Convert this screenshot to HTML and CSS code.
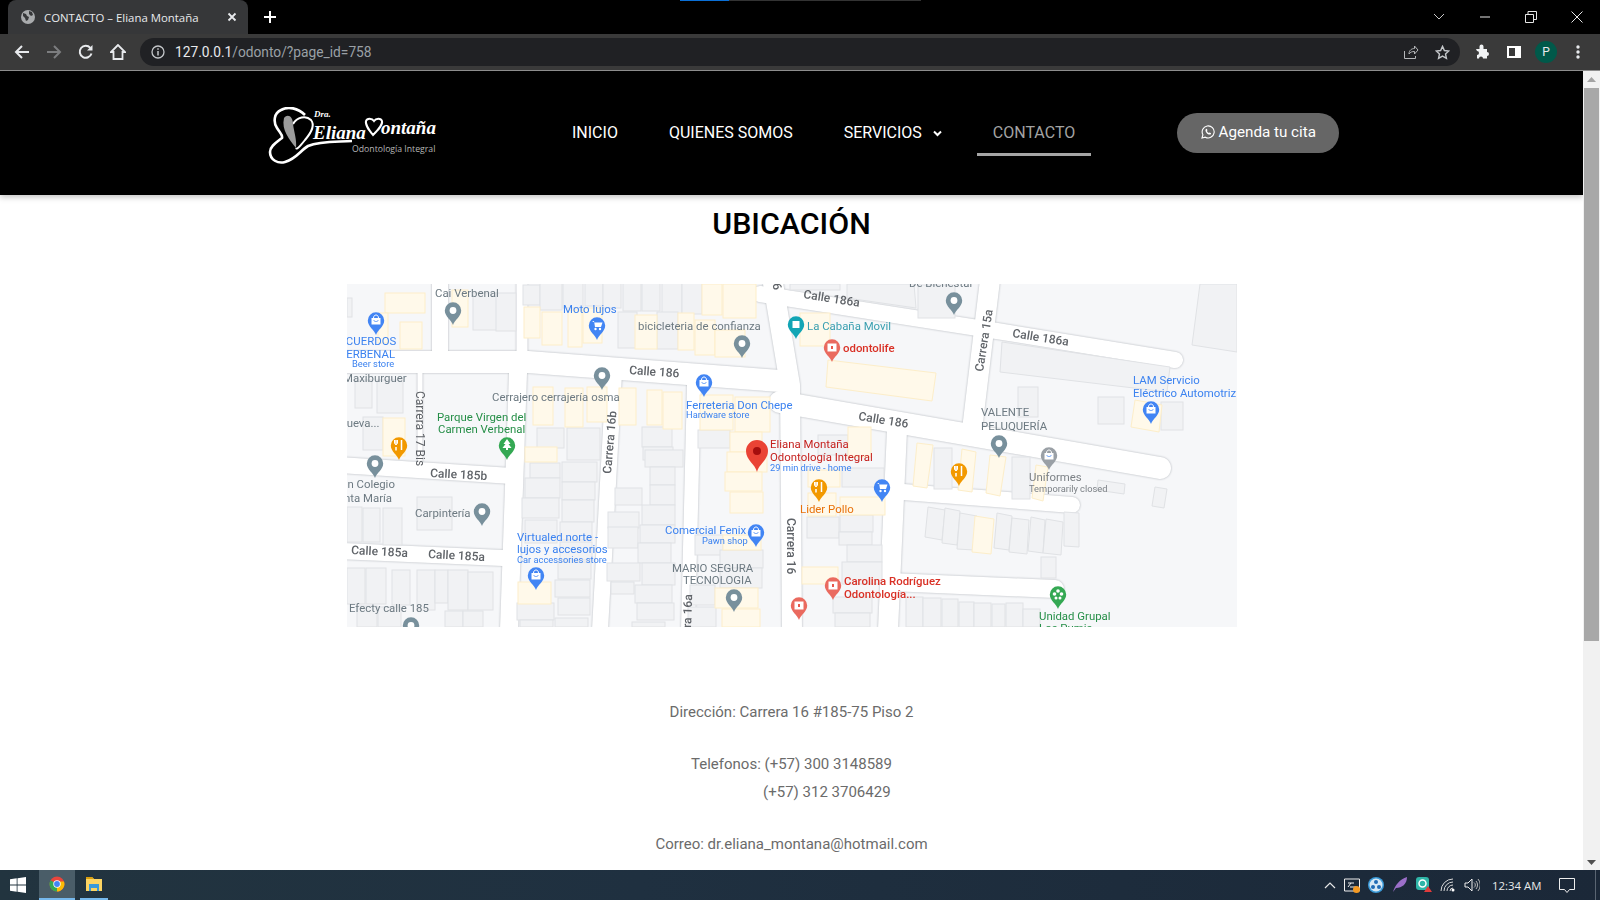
FILE: index.html
```html
<!DOCTYPE html>
<html lang="es">
<head>
<meta charset="utf-8">
<title>CONTACTO – Eliana Montaña</title>
<link rel="stylesheet" href="styles.css">
</head>
<body>
<div class="tabstrip">
  <div class="progress"><span class="progress-blue"></span><span class="progress-rest"></span></div>
  <div class="tab">
    <svg class="tab-globe" width="16" height="16" viewBox="0 0 16 16"><circle cx="8" cy="8" r="7" fill="#a9abad"/><path d="M3 4l3 1 1 2 2 1-1 3-2 1-1-3-2-2zM9 2l3 1 1 3-2 1-2-2z" fill="#37383a"/></svg>
    <span class="tab-title">CONTACTO – Eliana Montaña</span>
    <svg class="tab-close" width="10" height="10" viewBox="0 0 10 10"><path d="M1.500 1.500l7 7M8.500 1.500l-7 7" stroke="#e8eaed" stroke-width="1.800"/></svg>
  </div>
  <svg class="newtab" width="14" height="14" viewBox="0 0 14 14"><path d="M7 1v12M1 7h12" stroke="#fff" stroke-width="2"/></svg>
  <div class="winctl">
    <svg width="16" height="10" viewBox="0 0 16 10"><path d="M3 2l5 5 5-5" fill="none" stroke="#c8c8c8" stroke-width="1"/></svg>
    <svg width="12" height="12" viewBox="0 0 12 12"><path d="M1 6h10" stroke="#e6e6e6" stroke-width="1"/></svg>
    <svg width="12" height="12" viewBox="0 0 12 12"><path d="M.5 3.500h8v8h-8zM3 3.500V.5h8.500v8H8.500" fill="none" stroke="#e6e6e6" stroke-width="1"/></svg>
    <svg width="12" height="12" viewBox="0 0 12 12"><path d="M.5.5l11 11M11.500.5l-11 11" stroke="#e6e6e6" stroke-width="1"/></svg>
  </div>
</div>
<div class="toolbar">
  <svg class="tool" width="16" height="16" viewBox="0 0 16 16"><path d="M15 8H2M8 2L2 8l6 6" fill="none" stroke="#e8eaed" stroke-width="2"/></svg>
  <svg class="tool" width="16" height="16" viewBox="0 0 16 16"><path d="M1 8h13M8 2l6 6-6 6" fill="none" stroke="#7c7d7f" stroke-width="2"/></svg>
  <svg class="tool" width="16" height="16" viewBox="0 0 16 16"><path d="M13.500 9.500A6 6 0 1 1 12.300 3.800" fill="none" stroke="#e8eaed" stroke-width="2"/><path d="M14.500 1v5.500H9z" fill="#e8eaed"/></svg>
  <svg class="tool" width="16" height="16" viewBox="0 0 16 16"><path d="M8 1L1 8h2.500v7h9V8H15z" fill="none" stroke="#e8eaed" stroke-width="1.800"/></svg>
  <div class="omnibox">
    <svg width="14" height="14" viewBox="0 0 14 14"><circle cx="7" cy="7" r="6" fill="none" stroke="#c4c7ca" stroke-width="1.300"/><path d="M7 6v4.500M7 3.300v1.500" stroke="#c4c7ca" stroke-width="1.500"/></svg>
    <span class="url"><span class="url-host">127.0.0.1</span>/odonto/?page_id=758</span>
    <svg class="omni-share" width="16" height="16" viewBox="0 0 16 16"><path d="M1.500 7v7.500h11V12M6 10c0-4 3-5.500 5.500-5.500V2L15 6l-3.500 4V7.500C9 7.500 7.500 8 6 10z" fill="none" stroke="#b5b7b9" stroke-width="1"/></svg>
    <svg width="15" height="15" viewBox="0 0 16 16"><path d="M8 1.500l2 4.400 4.700.5-3.500 3.200 1 4.700L8 11.900l-4.200 2.400 1-4.700L1.300 6.400 6 5.900z" fill="none" stroke="#c4c7ca" stroke-width="1.500"/></svg>
  </div>
  <div class="toolright">
    <svg width="16" height="16" viewBox="0 0 16 16"><path d="M1 6h3.500V3.500a2 2 0 0 1 4 0V6H12v3a2 2 0 0 1 0 4v2.500H8a2 2 0 0 0-4 0H2v-3.500a2 2 0 0 0 0-4z" fill="#f1f3f4" transform="translate(1 -1)"/></svg>
    <svg width="14" height="12" viewBox="0 0 14 12"><path d="M0 0h14v12H0zM2 2v8h6V2z" fill="#fff" fill-rule="evenodd"/></svg>
    <span class="avatar">P</span>
    <svg width="4" height="14" viewBox="0 0 4 14"><circle cx="2" cy="2" r="1.700" fill="#e8eaed"/><circle cx="2" cy="7" r="1.700" fill="#e8eaed"/><circle cx="2" cy="12" r="1.700" fill="#e8eaed"/></svg>
  </div>
</div>
<div class="viewport">
  <main class="page">
    <header class="site-header">
      <a class="logo">
        <svg width="172" height="58" viewBox="268 107 172 58">
          <path d="M305 115C298 108 288 106 281 110C274 113 273 122 277 128C280 133 283 135 282 138C277 142 270 146 270 152C270 160 278 164 285 162C296 159 301 150 308 146C320 141 335 142 352 141" fill="none" stroke="#fff" stroke-width="2.600"/>
          <path d="M293 124C297 117 306 115 311 120C315 125 311 133 305 140C301 145 297 150 296 148" fill="none" stroke="#fff" stroke-width="2"/>
          <path d="M284 118C288 113 293 117 293 124C294 132 297 140 296 148C290 140 281 130 284 118Z" fill="#9b9b9b"/>
          <text class="logo-dra" x="314" y="117">Dra.</text>
          <text class="logo-name" x="313" y="139">Eliana</text>
          <path d="M373 135c-4-5-8-10-7-14 1-3 6-3 8 0 2-3 7-3 8 0 1 4-4 9-9 14z" fill="none" stroke="#fff" stroke-width="2"/>
          <text class="logo-name" x="381" y="134">ontaña</text>
          <text class="logo-sub" x="352" y="152">Odontología Integral</text>
        </svg>
      </a>
      <nav class="nav">
        <a class="nav-item">INICIO</a>
        <a class="nav-item">QUIENES SOMOS</a>
        <a class="nav-item">SERVICIOS<svg class="chev" width="9" height="7" viewBox="0 0 9 7"><path d="M1 1.500l3.500 3.500L8 1.500" fill="none" stroke="#fff" stroke-width="2"/></svg></a>
        <a class="nav-item nav-current">CONTACTO</a>
      </nav>
      <a class="cta">
        <svg width="14" height="14" viewBox="0 0 14 14"><path d="M1 13l.9-3.200A6 6 0 1 1 4.300 12.200z" fill="none" stroke="#fff" stroke-width="1.100"/><path d="M5 4c-1 1-.6 2.500.6 3.900S8.600 10 9.800 9.200l.3-1-1.500-.8-.7.600c-.9-.4-1.600-1.100-2-2l.6-.7-.7-1.500z" fill="#fff"/></svg>
        Agenda tu cita
      </a>
    </header>
    <h1 class="title">UBICACIÓN</h1>
    <svg class="map" width="890" height="343" viewBox="347 284 890 343">
      <defs>
        <path id="pinshape" d="M0 0C-1.500-5-8.200-8.500-8.200-14.500A8.200 8.200 0 1 1 8.200-14.500C8.200-8.500 1.500-5 0 0Z"/>
        <g id="pd"><use href="#pinshape"/><circle cy="-14.500" r="3.400" fill="#fff"/></g>
        <g id="ps"><use href="#pinshape"/><path d="M-4.500-17h9v6.500h-9z" fill="#fff"/><path d="M-2.500-17c0-4 5-4 5 0" fill="none" stroke="#fff"/><path d="M-2.500-15c1 2 4 2 5 0" fill="none" stroke="#4285f4" stroke-width=".8"/></g>
        <g id="pc"><use href="#pinshape"/><path d="M-5-19h2l1 6h6l1.500-4.500h-8" fill="#fff"/><circle cx="-1.500" cy="-11" r="1.200" fill="#fff"/><circle cx="3" cy="-11" r="1.200" fill="#fff"/></g>
        <g id="pf"><use href="#pinshape"/><path d="M-3-20v5M-3-13v3.500M2.500-20v10" stroke="#fff" stroke-width="1.500"/><path d="M-4.500-20v3c0 2 3 2 3 0v-3" fill="none" stroke="#fff"/></g>
        <g id="ph"><use href="#pinshape"/><path d="M-4.500-18.500h9v8h-9z" fill="#fff"/><path d="M-1-16h2v3h-2z" fill="#e8574c"/></g>
        <g id="pt"><use href="#pinshape"/><path d="M0-21l3.500 5H1.500l3 4h-3.500v2h-2v-2h-3.500l3-4h-2z" fill="#fff"/></g>
        <g id="pg"><use href="#pinshape"/><circle cy="-18" r="1.800" fill="#fff"/><circle cx="-3.500" cy="-15" r="1.800" fill="#fff"/><circle cx="3.500" cy="-15" r="1.800" fill="#fff"/><circle cx="-2" cy="-11" r="1.500" fill="#fff"/><circle cx="2" cy="-11" r="1.500" fill="#fff"/></g>
        <g id="pq"><use href="#pinshape"/><path d="M-3.500-18h7v7h-7z" fill="#fff"/></g>
      </defs>
      <rect class="ground" x="347" y="284" width="890" height="343"/>
      <g class="roads">
        <path class="w22" d="M340 362H528L780 381"/>
        <path class="w22" d="M780 402L1160 468"/>
        <path class="w20" d="M773 283L790 385L792 630"/>
        <path class="w16" d="M760 294L997 331L1175 360"/>
        <path class="w20" d="M990 280L972 430"/>
        <path class="w16" d="M614 373L600 630"/>
        <path class="w14" d="M694 385L688 630"/>
        <path class="w5" d="M420 373V465"/>
        <path class="w16" d="M340 465L512 476"/>
        <path class="w18" d="M518 373L509 630"/>
        <path class="w11" d="M522 280V362"/>
        <path class="w16" d="M340 551L503 558"/>
        <path class="w16" d="M440 280V355"/>
        <path class="w20" d="M897 430L888 630"/>
        <path class="w16" d="M890 491L1072 505"/>
        <path class="w18" d="M890 582L1055 589"/>
      </g>
      <g class="bld">
        <rect x="347" y="298" width="5" height="19"/><rect x="473" y="293" width="24" height="37"/><rect x="496" y="293" width="20" height="38"/>
        <rect x="523" y="285" width="17" height="20"/><rect x="540" y="283" width="22" height="27"/><rect x="563" y="283" width="20" height="25"/><rect x="585" y="283" width="18" height="23"/><rect x="603" y="283" width="18" height="25"/><rect x="623" y="283" width="18" height="28"/><rect x="642" y="283" width="18" height="28"/><rect x="662" y="283" width="20" height="31"/><rect x="682" y="283" width="20" height="31"/>
        <rect x="618" y="312" width="19" height="36"/><rect x="657" y="312" width="21" height="37"/>
        <rect x="355" y="380" width="17" height="28"/><rect x="377" y="380" width="26" height="33"/><rect x="363" y="417" width="20" height="33"/>
        <rect x="537" y="428" width="27" height="20"/><rect x="567" y="428" width="33" height="32"/><rect x="642" y="427" width="30" height="20"/><rect x="643" y="447" width="30" height="13"/><rect x="698" y="430" width="32" height="18"/>
        <rect x="530" y="463" width="30" height="15"/><rect x="562" y="462" width="35" height="20"/><rect x="525" y="478" width="35" height="20"/><rect x="562" y="482" width="33" height="18"/><rect x="522" y="498" width="37" height="20"/><rect x="562" y="500" width="32" height="22"/><rect x="525" y="520" width="32" height="23"/><rect x="560" y="522" width="32" height="18"/><rect x="560" y="542" width="32" height="18"/><rect x="558" y="562" width="33" height="17"/><rect x="555" y="580" width="35" height="17"/><rect x="558" y="598" width="32" height="17"/><rect x="517" y="603" width="37" height="17"/><rect x="520" y="620" width="33" height="7"/><rect x="555" y="618" width="33" height="9"/>
        <rect x="645" y="450" width="38" height="17"/><rect x="650" y="467" width="25" height="18"/><rect x="615" y="488" width="27" height="17"/><rect x="650" y="485" width="25" height="20"/><rect x="642" y="505" width="33" height="20"/><rect x="608" y="512" width="31" height="16"/><rect x="608" y="527" width="30" height="21"/><rect x="640" y="525" width="35" height="18"/><rect x="638" y="543" width="33" height="20"/><rect x="607" y="563" width="33" height="18"/><rect x="642" y="563" width="33" height="22"/><rect x="611" y="582" width="23" height="12"/><rect x="635" y="585" width="37" height="18"/><rect x="637" y="603" width="37" height="17"/><rect x="632" y="622" width="33" height="5"/>
        <rect x="695" y="535" width="28" height="20"/><rect x="720" y="550" width="43" height="18"/><rect x="720" y="568" width="42" height="20"/><rect x="690" y="585" width="25" height="20"/><rect x="688" y="607" width="28" height="20"/>
        <rect x="417" y="497" width="35" height="33"/><rect x="347" y="507" width="15" height="35"/><rect x="363" y="508" width="17" height="34"/><rect x="383" y="508" width="19" height="37"/>
        <rect x="347" y="568" width="18" height="36"/><rect x="366" y="568" width="20" height="36"/><rect x="392" y="570" width="18" height="35"/><rect x="417" y="570" width="18" height="40"/><rect x="435" y="570" width="13" height="33"/><rect x="448" y="570" width="20" height="40"/><rect x="468" y="572" width="25" height="38"/><rect x="357" y="606" width="20" height="21"/><rect x="378" y="607" width="23" height="20"/><rect x="445" y="611" width="18" height="16"/><rect x="463" y="611" width="20" height="16"/>
        <polygon points="847,284 914,284 916,308 847,298"/><rect x="918" y="285" width="37" height="33"/><rect x="790" y="284" width="50" height="6"/>
        <polygon points="1002,342 1170,367 1167,392 1000,372"/><rect x="1018" y="387" width="20" height="30"/><rect x="1098" y="397" width="26" height="27"/><rect x="1161" y="402" width="22" height="28"/><polygon points="1200,284 1237,284 1237,352 1192,345"/>
        <rect x="818" y="435" width="30" height="20"/><rect x="934" y="448" width="18" height="41"/><rect x="1012" y="457" width="18" height="42"/><polygon points="1098,480 1125,484 1124,494 1097,490"/><polygon points="1155,487 1167,489 1164,508 1152,506"/>
        <polygon points="928,507 945,510 942,540 925,537"/><polygon points="945,508 960,511 957,545 942,543"/><polygon points="960,513 977,516 974,550 957,549"/><polygon points="997,513 1012,516 1009,550 994,548"/><polygon points="1012,518 1029,520 1027,554 1009,552"/><polygon points="1031,517 1045,520 1043,553 1028,551"/><polygon points="1046,519 1063,522 1061,555 1043,553"/><polygon points="1064,512 1079,513 1079,547 1064,546"/><rect x="1041" y="557" width="15" height="21"/>
        <rect x="906" y="597" width="17" height="30"/><rect x="923" y="598" width="18" height="29"/><rect x="942" y="599" width="16" height="28"/><rect x="959" y="602" width="15" height="25"/><rect x="974" y="603" width="17" height="24"/><rect x="992" y="604" width="13" height="23"/><rect x="1006" y="603" width="17" height="24"/><rect x="1023" y="609" width="17" height="18"/>
        <rect x="842" y="468" width="42" height="19"/><rect x="807" y="517" width="32" height="21"/><rect x="840" y="515" width="33" height="17"/><rect x="839" y="532" width="33" height="13"/><rect x="847" y="545" width="35" height="17"/><rect x="842" y="562" width="40" height="22"/><rect x="833" y="597" width="39" height="16"/><rect x="835" y="613" width="35" height="14"/>
      </g>
      <g class="yel">
        <rect x="385" y="293" width="40" height="20"/><rect x="400" y="322" width="22" height="27"/><rect x="378" y="313" width="10" height="30"/><rect x="452" y="290" width="16" height="37"/>
        <rect x="702" y="284" width="20" height="31"/><rect x="723" y="284" width="33" height="34"/>
        <rect x="524" y="307" width="16" height="31"/><rect x="542" y="312" width="20" height="33"/><rect x="568" y="310" width="14" height="37"/><rect x="583" y="308" width="19" height="35"/><rect x="635" y="315" width="22" height="34"/><rect x="678" y="313" width="16" height="37"/><rect x="695" y="320" width="20" height="35"/><rect x="715" y="330" width="30" height="27"/>
        <rect x="533" y="387" width="20" height="38"/><rect x="565" y="388" width="18" height="39"/><rect x="587" y="387" width="20" height="35"/><rect x="619" y="388" width="17" height="37"/><rect x="647" y="390" width="15" height="35"/><rect x="663" y="392" width="19" height="37"/><rect x="700" y="395" width="33" height="35"/><rect x="735" y="397" width="35" height="35"/>
        <rect x="730" y="432" width="32" height="20"/><rect x="525" y="447" width="32" height="15"/><rect x="383" y="418" width="22" height="38"/>
        <rect x="727" y="452" width="40" height="20"/><rect x="725" y="472" width="37" height="19"/><rect x="730" y="492" width="33" height="21"/><rect x="723" y="535" width="38" height="15"/><rect x="715" y="588" width="43" height="20"/><rect x="722" y="609" width="38" height="18"/><rect x="518" y="582" width="33" height="22"/>
        <rect x="800" y="313" width="30" height="33"/><polygon points="828,360 936,373 932,401 826,387"/><rect x="848" y="427" width="23" height="30"/>
        <polygon points="917,443 933,445 927,488 913,486"/><polygon points="962,449 976,452 972,492 958,490"/><polygon points="990,455 1006,457 1000,496 986,493"/><polygon points="1036,465 1048,467 1043,501 1032,498"/>
        <rect x="808" y="470" width="32" height="17"/><rect x="808" y="493" width="28" height="23"/><rect x="840" y="497" width="45" height="18"/><rect x="802" y="567" width="36" height="17"/>
        <polygon points="975,516 994,519 991,554 972,552"/><polygon points="1135,400 1162,405 1159,432 1131,427"/>
      </g>
      <g class="pins">
        <use href="#ps" class="blue" x="376" y="335"/><use href="#pd" class="gray" x="453" y="325"/><use href="#pc" class="blue" x="597" y="340"/><use href="#pd" class="gray" x="742" y="358"/><use href="#pd" class="gray" x="602" y="390"/><use href="#ps" class="blue" x="704" y="397"/>
        <use href="#pf" class="orange" x="399" y="460"/><use href="#pt" class="green" x="507" y="460"/><use href="#pd" class="gray" x="375" y="478"/><use href="#pd" class="gray" x="482" y="526"/><use href="#ps" class="blue" x="536" y="590"/><use href="#ps" class="blue" x="756" y="547"/><use href="#pd" class="gray" x="734" y="612"/><use href="#pd" class="gray" x="411" y="640"/>
        <use href="#pq" class="teal" x="796" y="339"/><use href="#ph" class="red" x="832" y="362"/><use href="#pd" class="gray" x="954" y="315"/><use href="#ps" class="blue" x="1151" y="424"/><use href="#pd" class="gray" x="999" y="458"/><use href="#ps" class="lgray" x="1049" y="470"/><use href="#pf" class="orange" x="959" y="486"/><use href="#pf" class="orange" x="819" y="502"/><use href="#pc" class="blue" x="882" y="502"/><use href="#ph" class="red" x="833" y="600"/><use href="#ph" class="red" x="799" y="620"/><use href="#pg" class="green" x="1058" y="609"/>
        <path class="mainpin" d="M757 472C755 464 746 460 746 451A11 11 0 1 1 768 451C768 460 759 464 757 472Z"/><circle class="mainpin-dot" cx="757" cy="451" r="4"/>
      </g>
      <g class="lbl">
        <text class="t-gray" x="435" y="297">Cai Verbenal</text>
        <text class="t-gray" x="638" y="330">bicicleteria de confianza</text>
        <text class="t-gray" x="343" y="382">Maxiburguer</text>
        <text class="t-gray" x="492" y="401">Cerrajero cerrajería osma</text>
        <text class="t-gray" x="338.500" y="427">Nueva...</text>
        <text class="t-gray" x="340" y="488">Un Colegio</text>
        <text class="t-gray" x="331" y="502">Santa María</text>
        <text class="t-gray" x="415" y="517">Carpintería</text>
        <text class="t-gray" x="349" y="612">Efecty calle 185</text>
        <text class="t-gray" x="672" y="572">MARIO SEGURA</text>
        <text class="t-gray" x="683" y="584">TECNOLOGIA</text>
        <text class="t-gray" x="909" y="287">De Bienestar</text>
        <text class="t-gray" x="981" y="416">VALENTE</text>
        <text class="t-gray" x="981" y="430">PELUQUERÍA</text>
        <text class="t-lgray" x="1029" y="481">Uniformes</text>
        <text class="t-lgray t-small" x="1029" y="492">Temporarily closed</text>
        <text class="t-blue" x="563" y="313">Moto lujos</text>
        <text class="t-blue" x="338.500" y="345">ACUERDOS</text>
        <text class="t-blue" x="339" y="358">VERBENAL</text>
        <text class="t-blue t-small" x="352" y="367">Beer store</text>
        <text class="t-blue" x="686" y="409">Ferreteria Don Chepe</text>
        <text class="t-blue t-small" x="686" y="418">Hardware store</text>
        <text class="t-blue" x="517" y="541">Virtualed norte -</text>
        <text class="t-blue" x="517" y="553">lujos y accesorios</text>
        <text class="t-blue t-small" x="517" y="563">Car accessories store</text>
        <text class="t-blue" x="665" y="534">Comercial Fenix</text>
        <text class="t-blue t-small" x="702" y="544">Pawn shop</text>
        <text class="t-blue" x="1133" y="384">LAM Servicio</text>
        <text class="t-blue" x="1133" y="397">Eléctrico Automotriz</text>
        <text class="t-blue t-small" x="770" y="471">29 min drive - home</text>
        <text class="t-green" x="437" y="421">Parque Virgen del</text>
        <text class="t-green" x="438" y="433">Carmen Verbenal</text>
        <text class="t-green" x="1039" y="620">Unidad Grupal</text>
        <text class="t-green" x="1039" y="632">Los Pumis</text>
        <text class="t-dred" x="770" y="448">Eliana Montaña</text>
        <text class="t-dred" x="770" y="461">Odontología Integral</text>
        <text class="t-teal" x="807" y="330">La Cabaña Movil</text>
        <text class="t-red" x="843" y="352">odontolife</text>
        <text class="t-red" x="844" y="585">Carolina Rodríguez</text>
        <text class="t-red" x="844" y="598">Odontología...</text>
        <text class="t-orange" x="800" y="513">Lider Pollo</text>
        <text class="t-road" transform="translate(629 374) rotate(4)">Calle 186</text>
        <text class="t-road" transform="translate(858 420) rotate(9)">Calle 186</text>
        <text class="t-road" transform="translate(803 298) rotate(9)">Calle 186a</text>
        <text class="t-road" transform="translate(1012 337) rotate(9)">Calle 186a</text>
        <text class="t-road" transform="translate(430 477) rotate(3)">Calle 185b</text>
        <text class="t-road" transform="translate(351 554) rotate(3)">Calle 185a</text>
        <text class="t-road" transform="translate(428 558) rotate(3)">Calle 185a</text>
        <text class="t-road t-thin" transform="translate(416 391) rotate(90)">Carrera 17 Bis</text>
        <text class="t-road" transform="translate(611 474) rotate(-85)">Carrera 16b</text>
        <text class="t-road" transform="translate(690 657) rotate(-88)">Carrera 16a</text>
        <text class="t-road" transform="translate(787 518) rotate(90)">Carrera 16</text>
        <text class="t-road" transform="translate(983 372) rotate(-81)">Carrera 15a</text>
        <text class="t-road" transform="translate(764 235) rotate(80)">Carrera 16</text>
      </g>
    </svg>
    <div class="info">
      <p class="info-line">Dirección: Carrera 16 #185-75 Piso 2</p>
      <p class="info-line info-gap">Telefonos: (+57) 300 3148589<br>&nbsp;&nbsp;&nbsp;&nbsp;&nbsp;&nbsp;&nbsp;&nbsp;&nbsp;&nbsp;&nbsp;&nbsp;&nbsp;&nbsp;&nbsp;&nbsp;&nbsp;&nbsp;&nbsp;(+57) 312 3706429</p>
      <p class="info-line info-gap">Correo: dr.eliana_montana@hotmail.com</p>
    </div>
  </main>
  <div class="scrollbar">
    <svg class="arrow" width="9" height="5" viewBox="0 0 9 5"><path d="M4.500 0L9 5H0z" fill="#a3a3a3"/></svg>
    <div class="thumb"></div>
    <svg class="arrow arrow-down" width="9" height="5" viewBox="0 0 9 5"><path d="M4.500 5L9 0H0z" fill="#505050"/></svg>
  </div>
</div>
<footer class="taskbar">
  <svg class="win" width="16" height="16" viewBox="0 0 16 16"><path d="M0 2.300l6.700-1v6.300H0zM7.500 1.200L16 0v7.600H7.500zM0 8.400h6.700v6.300l-6.700-1zM7.500 8.400H16V16l-8.500-1.200z" fill="#fff"/></svg>
  <div class="task task-chrome">
    <svg width="16" height="16" viewBox="0 0 16 16"><circle cx="8" cy="8" r="7.500" fill="#e8453c"/><path d="M8 8L1.500 4.200A7.500 7.500 0 0 0 8 15.500z" fill="#34a853"/><path d="M8 8v7.500A7.500 7.500 0 0 0 15 5.500H8z" fill="#fbbc05"/><circle cx="8" cy="8" r="3.700" fill="#fff"/><circle cx="8" cy="8" r="2.900" fill="#4285f4"/></svg>
  </div>
  <div class="task task-files">
    <svg width="16" height="14" viewBox="0 0 16 14"><path d="M0 0h6l2 2h8v12H0z" fill="#fcd462"/><path d="M0 0h6l2 2H0z" fill="#d79e0e"/><path d="M3 7h10v7h-2v-3H5v3H3z" fill="#3a9ad9"/></svg>
  </div>
  <div class="tray">
    <svg width="12" height="8" viewBox="0 0 12 8"><path d="M1 7l5-5 5 5" fill="none" stroke="#e8e8e8" stroke-width="1.200"/></svg>
    <svg width="16" height="16" viewBox="0 0 16 16"><path d="M.5 2h15v12H.5z" fill="none" stroke="#eee"/><path d="M4 6h6M4 10l3-4M12 10H6" stroke="#eee"/><circle cx="12.500" cy="12.500" r="3.500" fill="#f59a23"/></svg>
    <svg width="16" height="16" viewBox="0 0 16 16"><circle cx="8" cy="8" r="8" fill="#3a9ad9"/><circle cx="8" cy="8" r="6.500" fill="#d6e8f5"/><circle cx="8" cy="5" r="2" fill="#1f6bb5"/><circle cx="5" cy="10" r="2" fill="#1f6bb5"/><circle cx="11" cy="10" r="2" fill="#1f6bb5"/></svg>
    <svg width="16" height="16" viewBox="0 0 16 16"><path d="M1 15C3 8 8 2 15 0c0 7-5 11-11 11z" fill="#9b6fc9"/></svg>
    <svg width="16" height="16" viewBox="0 0 16 16"><rect width="13" height="13" rx="3" fill="#2fb5a8"/><circle cx="6.500" cy="6.500" r="3.500" fill="none" stroke="#fff" stroke-width="1.500"/><path d="M12 9l4 6H8z" fill="#e23b3b"/></svg>
    <svg width="16" height="14" viewBox="0 0 16 14"><path d="M1 13A12 12 0 0 1 13 1M4 13a9 9 0 0 1 9-9M7 13a6 6 0 0 1 6-6M10 13a3 3 0 0 1 3-3" fill="none" stroke="#d8d8d8"/><circle cx="13" cy="12" r="1.500" fill="#fff"/></svg>
    <svg width="16" height="14" viewBox="0 0 16 14"><path d="M1 5h3l4-4v12L4 9H1z" fill="none" stroke="#eee"/><path d="M10 4.500a3 3 0 0 1 0 5M12 3a6 6 0 0 1 0 8M14 1a9 9 0 0 1 0 12" fill="none" stroke="#bbb"/></svg>
    <span class="clock">12:34 AM</span>
    <svg class="notif" width="16" height="15" viewBox="0 0 16 15"><path d="M.5.500h15v11h-5l-2.500 3-2.500-3h-5z" fill="none" stroke="#eee"/></svg>
    <span class="desk"></span>
  </div>
</footer>
</body>
</html>
```

FILE: styles.css
```css
*{box-sizing:border-box}
html,body{margin:0;height:900px;overflow:hidden}
body{display:flex;flex-direction:column;width:1600px;font-family:Roboto,"Liberation Sans",sans-serif;background:#000}
svg{display:block;flex:none}

.tabstrip{height:34px;background:#000;display:flex;align-items:flex-end;position:relative;padding-left:8px}
.progress{position:absolute;left:680px;top:0;display:flex;height:1px}
.progress-blue{width:49px;background:#0a6fd6}
.progress-rest{width:192px;background:#333}
.tab{width:240px;height:34px;background:#363739;border-radius:8px 8px 0 0;display:flex;align-items:center;padding:0 0 0 12px}
.tab-globe{margin-right:8px}
.tab-title{font-family:"Open Sans",sans-serif;font-size:11.4px;color:#e8eaed;width:182px;white-space:nowrap}
.tab-close{margin-left:1px}
.newtab{margin:0 0 10px 15px}
.winctl{margin-left:auto;height:34px;display:flex;align-items:center;gap:34px;padding-right:17px}
.winctl svg:first-child{margin-right:-2px}

.toolbar{height:37px;background:#3a3a3a;border-bottom:1px solid #8d8d8d;display:flex;align-items:center;padding:0 14px 0 14px;gap:16px}
.omnibox{flex:none;width:1320px;height:28px;margin-left:-2px;background:#202124;border-radius:14px;display:flex;align-items:center;padding:0 10px 0 11px;font-size:13.750px;color:#9aa0a6}
.url{margin-left:10px}
.url-host{color:#e8eaed}
.omni-share{margin-left:auto;margin-right:16px}
.toolright{display:flex;flex:none;align-items:center;gap:0;margin-left:-2px}
.toolright svg:nth-child(1){margin-right:17px}
.toolright svg:nth-child(2){margin-right:14px}
.avatar{width:22px;height:22px;border-radius:50%;background:#00594a;color:#e8eaed;font-size:12px;display:flex;align-items:center;justify-content:center;margin-right:19px}

.viewport{flex:1;display:flex;min-height:0;background:#fff}
.page{flex:1;min-width:0;overflow:hidden;background:#fff}
.site-header{height:124px;background:#000;display:flex;align-items:flex-start;padding:36px 0 0 268px;box-shadow:0 2px 6px rgba(0,0,0,.25);position:relative}
.logo{display:block;margin-right:116px}
.logo-dra{font:italic bold 9px "Liberation Serif",serif;fill:#fff}
.logo-name{font:italic bold 19px "Liberation Serif",serif;fill:#fff}
.logo-sub{font:8.700px "Open Sans",sans-serif;fill:#b5b5b5}
.nav{display:flex;gap:19px;height:49px}
.nav-item{padding:16px 16px 0;height:49px;color:#fff;font-size:16px;display:flex;align-items:flex-start;line-height:20px}
.nav-current{color:#a3a3a3;border-bottom:3px solid #a5a5a5}
.chev{margin:7px 0 0 11px}
.cta{width:162px;height:40px;margin:6px 0 0 86px;padding-bottom:2px;background:#666;border-radius:20px;color:#fff;font-size:15.200px;display:flex;align-items:center;justify-content:center;gap:4px}

.title{margin:12px 0 0;text-align:center;font-size:30.400px;line-height:34px;font-weight:500;color:#000}
.map{margin:43px auto 0;filter:blur(.5px)}
.ground{fill:#f6f7f9}
.roads path{fill:none;stroke:#fff;stroke-linecap:round;stroke-linejoin:round}
.roads{filter:drop-shadow(0 0 .8px #aeb2b8)}
.w22{stroke-width:22px}.w20{stroke-width:20px}.w18{stroke-width:18px}.w16{stroke-width:16px}.w14{stroke-width:14px}.w11{stroke-width:11px}.w5{stroke-width:5px}
.bld{fill:#f1f2f4;stroke:#e0e2e5;stroke-width:1}
.yel{fill:#fff9ea;stroke:#fdeec9;stroke-width:1}
.blue{fill:#4285f4}.gray{fill:#78909c}.lgray{fill:#9aa0a6}.orange{fill:#f29900}.green{fill:#34a853}.red{fill:#ea6a5f}.teal{fill:#12a5b5}
.mainpin{fill:#ea4335}.mainpin-dot{fill:#a50e0e}
.lbl text{font-family:Roboto,sans-serif;font-size:11.400px}
.lbl .t-small{font-size:9.300px}
.t-gray{fill:#6d7a82}.t-lgray{fill:#7c8186}.t-blue{fill:#3b82f0}.t-green{fill:#268f48}.t-dred{fill:#c5221f}.t-teal{fill:#3a9fb0}
.lbl .t-red{fill:#d93025;font-weight:500}
.t-orange{fill:#e8710a}
.lbl .t-road{fill:#5f6368;font-weight:500;font-size:12px}
.lbl .t-thin{font-weight:400}

.info{margin-top:71px;text-align:center;color:#6b6b6b;font-size:15px;line-height:28px}
.info-line{margin:0}
.info-gap{margin-top:24px}

.scrollbar{width:17px;background:#f1f1f1;display:flex;flex-direction:column;align-items:center;padding-top:6px}
.arrow{flex:none}
.thumb{width:15px;height:553px;background:#a8a8a8;margin-top:6px}
.arrow-down{margin-top:auto;margin-bottom:5px}

.taskbar{height:30px;background:linear-gradient(90deg,#22343f,#1f3040 40%,#1b2838);display:flex;align-items:center;padding-left:10px}
.win{margin-right:13px}
.task{height:30px;display:flex;align-items:center;justify-content:center;border-bottom:2px solid #76b9ed}
.task-chrome{width:36px;background:#4a5d68}
.task-files{width:28px;margin-left:5px}
.tray{margin-left:auto;display:flex;align-items:center;height:30px;gap:8px;color:#e8e8e8;font-size:11.400px;font-family:"Open Sans",sans-serif}
.clock{margin-left:4px;width:49px;white-space:nowrap}
.notif{margin-left:10px}
.desk{width:1px;height:30px;background:#5a6572;margin:0 4px 0 12px}
```
